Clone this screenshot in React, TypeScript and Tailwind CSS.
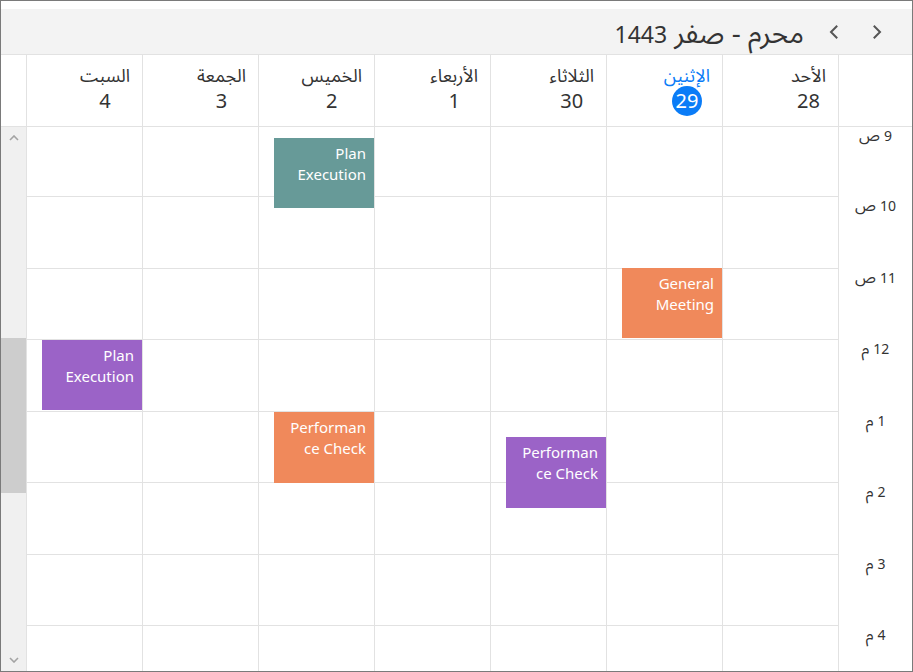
import React from 'react';

interface Day {
  name: string;
  num: string;
  today?: boolean;
}

interface Appt {
  day: number;
  lines: string[];
  className: string;
}

const days: Day[] = [
  { name: 'الأحد', num: '28' },
  { name: 'الإثنين', num: '29', today: true },
  { name: 'الثلاثاء', num: '30' },
  { name: 'الأربعاء', num: '1' },
  { name: 'الخميس', num: '2' },
  { name: 'الجمعة', num: '3' },
  { name: 'السبت', num: '4' },
];

const times = [
  ['9', 'ص'],
  ['10', 'ص'],
  ['11', 'ص'],
  ['12', 'م'],
  ['1', 'م'],
  ['2', 'م'],
  ['3', 'م'],
  ['4', 'م'],
];

const appts: Appt[] = [
  { day: 4, lines: ['Plan', 'Execution'], className: 'top-[11px] h-[70px] bg-[#679a98]' },
  { day: 1, lines: ['General', 'Meeting'], className: 'top-[141px] h-[70px] bg-[#f0895b]' },
  { day: 6, lines: ['Plan', 'Execution'], className: 'top-[213px] h-[70px] bg-[#9b63c7]' },
  { day: 4, lines: ['Performan', 'ce Check'], className: 'top-[285px] h-[71px] bg-[#f0895b]' },
  { day: 2, lines: ['Performan', 'ce Check'], className: 'top-[310px] h-[71px] bg-[#9b63c7]' },
];

function Chevron({ dir }: { dir: 'left' | 'right' }) {
  return (
    <svg width="16" height="16" viewBox="0 0 16 16" fill="none">
      <path
        d={dir === 'right' ? 'M5.5 2.5l5.5 5.5-5.5 5.5' : 'M10.5 2.5L5 8l5.5 5.5'}
        stroke="#555"
        strokeWidth="2"
        strokeLinecap="square"
      />
    </svg>
  );
}

function SmallArrow({ up }: { up?: boolean }) {
  return (
    <svg width="10" height="6" viewBox="0 0 10 6" fill="none">
      <path d={up ? 'M1 5l4-4 4 4' : 'M1 1l4 4 4-4'} stroke="#a3a3a3" strokeWidth="1.6" />
    </svg>
  );
}

export default function App() {
  return (
    <div
      dir="rtl"
      className="flex h-[672px] w-[913px] flex-col border border-[#7a7a7a] bg-white font-['Segoe_UI','Noto_Sans','Noto_Sans_Arabic','DejaVu_Sans',sans-serif] text-[#333]"
    >
      <div className="mt-[8px] flex h-[46px] shrink-0 items-center border-b border-[#e2e2e2] bg-[#f3f3f3] pr-[20px]">
        <button className="flex h-[30px] w-[30px] items-center justify-center">
          <Chevron dir="right" />
        </button>
        <button className="mr-[13px] flex h-[30px] w-[30px] items-center justify-center">
          <Chevron dir="left" />
        </button>
        <div className="mr-[15px] flex items-baseline gap-[7px] leading-none">
          <span className="text-[28px]">محرم - صفر</span>
          <span className="text-[23px]">1443</span>
        </div>
      </div>

      <div className="flex h-[72px] shrink-0 border-b border-[#e2e2e2]">
        <div className="w-[74px] shrink-0 border-l border-[#e2e2e2]" />
        {days.map((d) => (
          <div key={d.name} className="flex w-[116px] shrink-0 border-l border-[#e2e2e2] pr-[12px] pt-[10px]">
            <div className="flex flex-col items-center">
              <div className={`h-[21px] text-[18px] leading-[20px] ${d.today ? 'text-[#0a7cf7]' : 'text-[#333]'}`}>
                {d.name}
              </div>
              {d.today ? (
                <div className="flex h-[30px] w-[30px] items-center justify-center rounded-full bg-[#0a7cf7] text-[20px] leading-none text-white">
                  {d.num}
                </div>
              ) : (
                <div className="flex h-[30px] items-center text-[20px] leading-none">{d.num}</div>
              )}
            </div>
          </div>
        ))}
        <div className="w-[25px] shrink-0" />
      </div>

      <div className="flex min-h-0 flex-1 overflow-hidden">
        <div className="w-[74px] shrink-0 border-l border-[#e2e2e2]">
          {times.map(([n, s], i) => (
            <div
              key={n}
              className={`${i === 0 ? 'h-[70px]' : 'h-[71.5px]'} flex items-baseline justify-center gap-[4px] pt-[2px] leading-[12px]`}
            >
              <span className="text-[14px]">{n}</span>
              <span className="text-[16px]">{s}</span>
            </div>
          ))}
        </div>
        {days.map((d, di) => (
          <div key={d.name} className="relative w-[116px] shrink-0 border-l border-[#e2e2e2]">
            {times.map(([n], i) => (
              <div key={n} className={`${i === 0 ? 'h-[70px]' : 'h-[71.5px]'} border-b border-[#e2e2e2]`} />
            ))}
            {appts
              .filter((a) => a.day === di)
              .map((a, ai) => (
                <div
                  key={ai}
                  className={`absolute left-[15px] right-0 pr-[8px] pt-[5px] text-right text-[15px] leading-[21px] text-white ${a.className}`}
                >
                  {a.lines[0]}
                  <br />
                  {a.lines[1]}
                </div>
              ))}
          </div>
        ))}
        <div className="flex w-[25px] shrink-0 flex-col bg-[#f0f0f0]">
          <div className="flex h-[22px] items-center justify-center">
            <SmallArrow up />
          </div>
          <div className="h-[189px]" />
          <div className="h-[155px] bg-[#cdcdcd]" />
          <div className="flex-1" />
          <div className="flex h-[22px] items-center justify-center">
            <SmallArrow />
          </div>
        </div>
      </div>
    </div>
  );
}
